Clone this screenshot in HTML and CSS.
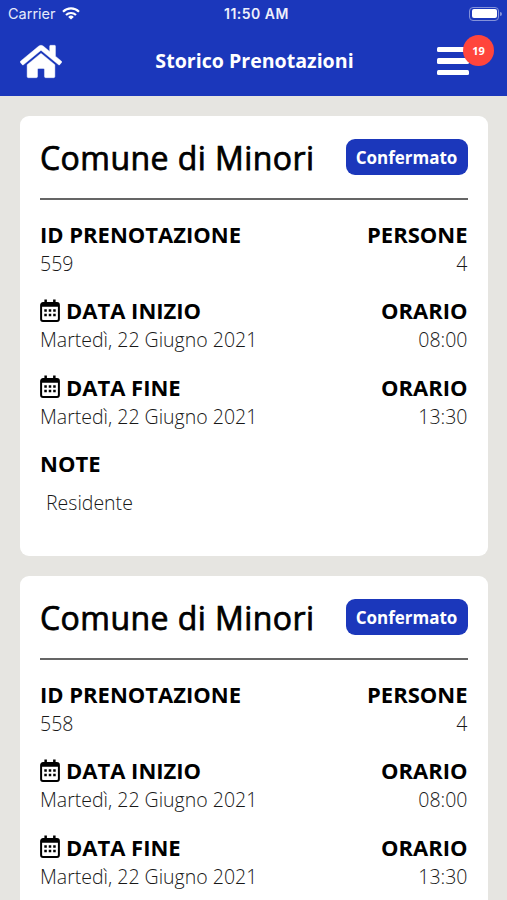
FILE: index.html
```html
<!DOCTYPE html>
<html lang="it">
<head>
<meta charset="utf-8">
<title>Storico Prenotazioni</title>
<link rel="stylesheet" href="styles.css">
</head>
<body>
<svg width="0" height="0" class="defs">
  <symbol id="cal" viewBox="0 0 20 23">
    <path fill="none" stroke="#000" stroke-width="2" d="M3 4.1h14a1.9 1.9 0 0 1 1.9 1.9v14a1.9 1.9 0 0 1-1.9 1.9H3A1.9 1.9 0 0 1 1.1 20V6A1.9 1.9 0 0 1 3 4.1z"/>
    <path d="M1 4h18v3.8H1zM4.4.6h2.5V5H4.4zM13.1.6h2.5V5h-2.5zM4.3 10.2h2.5v2.5H4.3zM8.75 10.2h2.5v2.5h-2.5zM13.2 10.2h2.5v2.5h-2.5zM4.3 14.7h2.5v2.5H4.3zM8.75 14.7h2.5v2.5h-2.5zM13.2 14.7h2.5v2.5h-2.5z"/>
  </symbol>
</svg>
<header class="top">
  <div class="status">
    <div class="carrier"><span>Carrier</span>
      <svg width="18" height="13" viewBox="0 0 18 13" fill="none" stroke="#fff" stroke-width="2.2"><path d="M1 4.7a11.5 11.5 0 0 1 16 0M4 8a7.2 7.2 0 0 1 10 0"/><path fill="#fff" stroke="none" d="M9 12.6L6.2 9.9a4 4 0 0 1 5.6 0z"/></svg>
    </div>
    <div class="clock">11:50 AM</div>
    <div class="battery"><i></i></div>
  </div>
  <nav class="nav">
    <svg class="home" viewBox="0 0 576 512" fill="#fff"><path d="M280.37 148.26L96 300.11V464a16 16 0 0 0 16 16l112.06-.29a16 16 0 0 0 15.92-16V368a16 16 0 0 1 16-16h64a16 16 0 0 1 16 16v95.64a16 16 0 0 0 16 16.05L464 480a16 16 0 0 0 16-16V300L295.67 148.26a12.19 12.19 0 0 0-15.3 0zM571.6 251.47L488 182.56V44.05a12 12 0 0 0-12-12h-56a12 12 0 0 0-12 12v72.61L318.47 43a48 48 0 0 0-61 0L4.34 251.47a12 12 0 0 0-1.6 16.9l25.5 31A12 12 0 0 0 45.15 301l235.22-193.74a12.19 12.19 0 0 1 15.3 0L530.9 301a12 12 0 0 0 16.9-1.6l25.5-31a12 12 0 0 0-1.7-16.93z" stroke="#fff" stroke-width="6"/></svg>
    <h1>Storico Prenotazioni</h1>
    <div class="menu"><i></i><i></i><i></i><span class="count">19</span></div>
  </nav>
</header>
<main>
  <section class="card">
    <div class="head"><h2>Comune di Minori</h2><span class="tag">Confermato</span></div>
    <div class="row"><div><h3>ID PRENOTAZIONE</h3><p>559</p></div><div class="right"><h3>PERSONE</h3><p>4</p></div></div>
    <div class="row"><div><h3><svg class="cal"><use href="#cal"/></svg>DATA INIZIO</h3><p>Martedì, 22 Giugno 2021</p></div><div class="right"><h3>ORARIO</h3><p>08:00</p></div></div>
    <div class="row"><div><h3><svg class="cal"><use href="#cal"/></svg>DATA FINE</h3><p>Martedì, 22 Giugno 2021</p></div><div class="right"><h3>ORARIO</h3><p>13:30</p></div></div>
    <div class="row"><div><h3>NOTE</h3><p class="note">Residente</p></div></div>
  </section>
  <section class="card last">
    <div class="head"><h2>Comune di Minori</h2><span class="tag">Confermato</span></div>
    <div class="row"><div><h3>ID PRENOTAZIONE</h3><p>558</p></div><div class="right"><h3>PERSONE</h3><p>4</p></div></div>
    <div class="row"><div><h3><svg class="cal"><use href="#cal"/></svg>DATA INIZIO</h3><p>Martedì, 22 Giugno 2021</p></div><div class="right"><h3>ORARIO</h3><p>08:00</p></div></div>
    <div class="row"><div><h3><svg class="cal"><use href="#cal"/></svg>DATA FINE</h3><p>Martedì, 22 Giugno 2021</p></div><div class="right"><h3>ORARIO</h3><p>13:30</p></div></div>
  </section>
</main>
</body>
</html>
```
FILE: styles.css
```css
* { box-sizing: border-box; }
body { margin: 0; height: 900px; overflow: hidden; background: #e6e5e1; color: #000; font-family: "Open Sans", sans-serif; display: flex; flex-direction: column; }
h1, h2, h3, p { margin: 0; }
.defs { position: absolute; }
.top { height: 96px; flex: none; background: #1b37bb; color: #fff; }
.status { height: 27px; padding: 0 7px 0 8px; display: grid; grid-template-columns: 1fr auto 1fr; align-items: center; font: 14.5px Inter, sans-serif; }
.carrier { display: flex; align-items: center; gap: 6px; color: #e6eafa; }
.clock { font-weight: 600; font-size: 14px; letter-spacing: .5px; padding-left: 5px; color: #eef0fb; }
.battery { position: relative; justify-self: end; width: 30px; height: 14px; margin-right: 1px; border: 1px solid #8492da; border-radius: 4px; padding: 1.5px; }
.battery::after { content: ""; position: absolute; right: -4px; top: 4px; width: 2px; height: 4px; border-radius: 0 2px 2px 0; background: #8492da; }
.battery i { display: block; height: 9px; background: #fff; border-radius: 2px; }
.nav { height: 67px; padding: 0 38px 0 20px; display: grid; grid-template-columns: 42px 1fr 32px; align-items: center; }
.home { width: 42px; height: 37px; margin-top: 1px; }
h1 { font-size: 19.6px; font-weight: 700; line-height: 26px; text-align: center; padding-left: 10px; white-space: nowrap; }
.menu { position: relative; display: flex; flex-direction: column; gap: 6px; margin-top: 1px; }
.menu i { height: 5.5px; background: #fff; border-radius: 1.5px; }
.count { position: absolute; left: 26px; top: -12px; width: 31px; height: 31px; border-radius: 50%; background: #ff453c; font-size: 11px; font-weight: 700; line-height: 31px; text-align: center; }
main { flex: 1; min-height: 0; overflow: hidden; padding: 19.5px 19.5px 0 20px; display: flex; flex-direction: column; gap: 20px; }
.card { height: 440px; flex: none; padding: 0 20px; background: #fff; border-radius: 9px; }
.last { flex: 1; border-radius: 9px 9px 0 0; }
.head { height: 84px; border-bottom: 2px solid #656565; display: flex; justify-content: space-between; align-items: center; margin-bottom: 20px; }
h2 { font-size: 32px; font-weight: 400; -webkit-text-stroke: .75px #000; letter-spacing: .45px; line-height: 44px; white-space: nowrap; padding-top: 3px; }
.tag { width: 122px; height: 36px; border-radius: 9px; background: #1b37bb; color: #fff; font-size: 17px; font-weight: 700; line-height: 37px; text-align: center; }
.row { display: flex; justify-content: space-between; height: 76.5px; }
.right { text-align: right; }
h3 { font-size: 22px; font-weight: 700; line-height: 28px; display: flex; align-items: center; white-space: nowrap; }
.right h3 { justify-content: flex-end; }
.cal { width: 20px; height: 23px; margin-right: 6px; }
p { font-size: 19.5px; font-weight: 300; line-height: 28px; padding-top: 2px; color: #181818; }
.note { padding: 12px 6px 0; }
```
